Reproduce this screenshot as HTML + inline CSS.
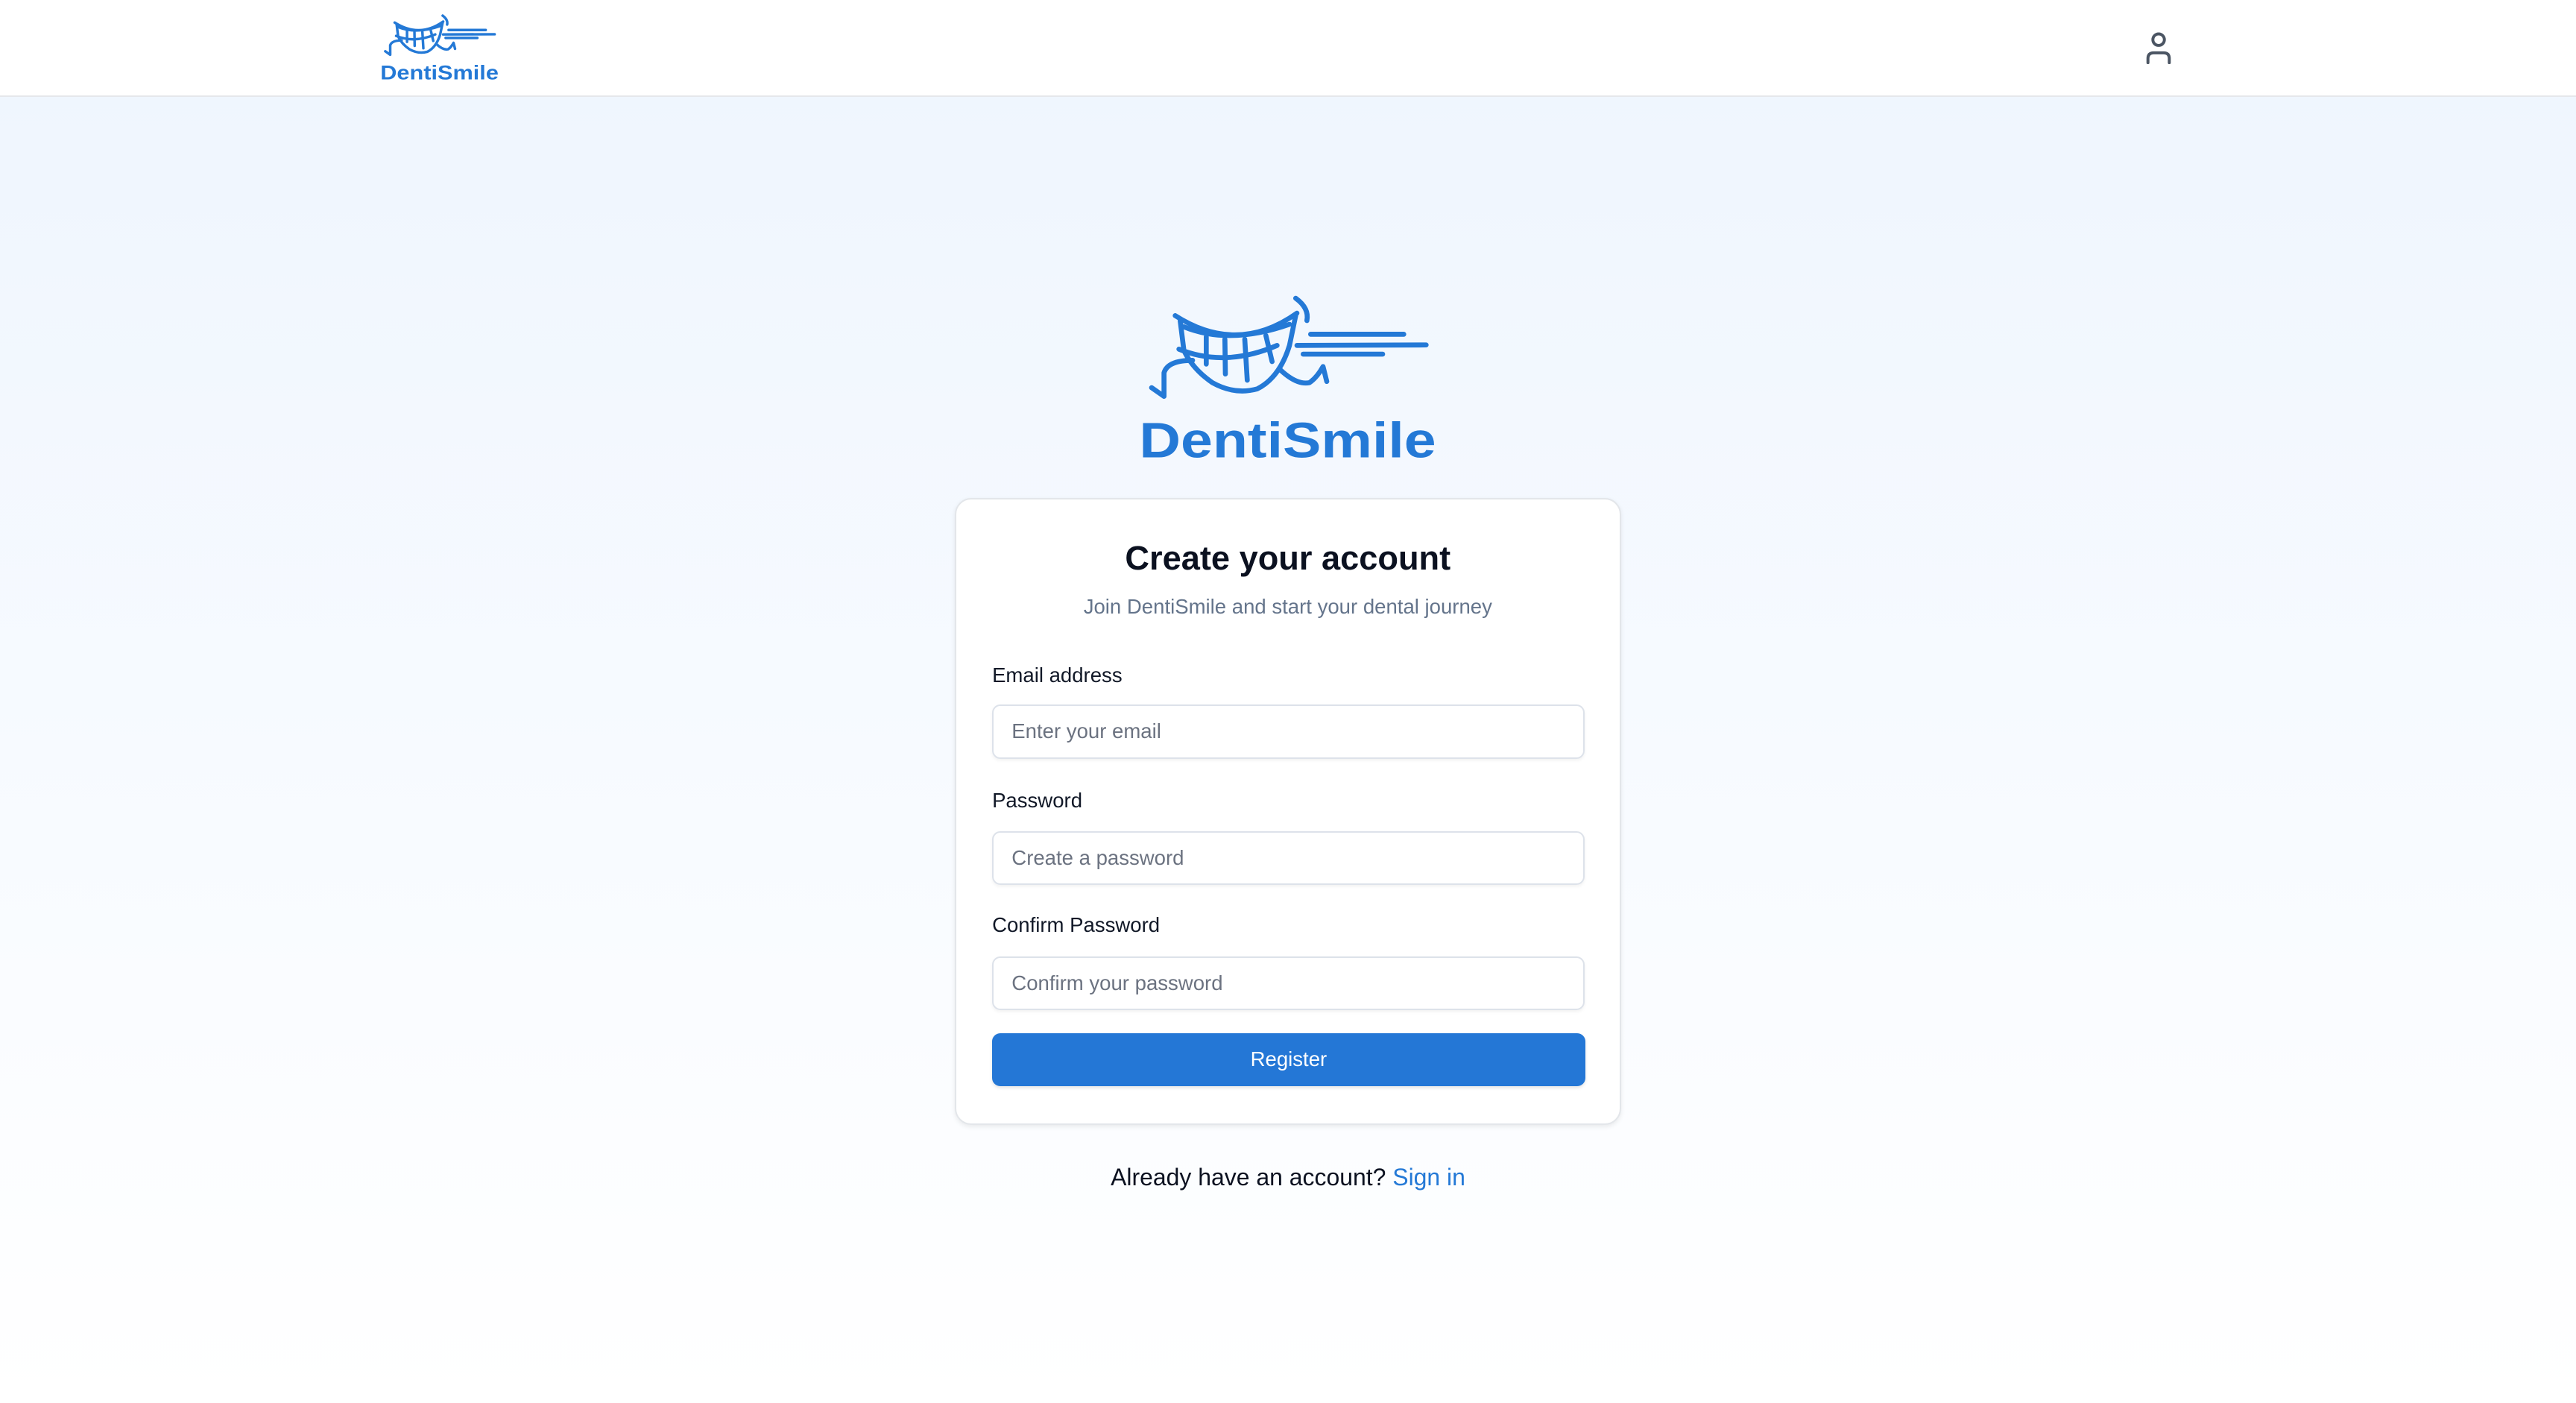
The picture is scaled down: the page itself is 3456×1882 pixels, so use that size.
<!DOCTYPE html>
<html><head><meta charset="utf-8"><style>
html,body{margin:0;padding:0}
body{width:3456px;height:1882px;overflow:hidden;font-family:"Liberation Sans",Arial,sans-serif;}
#z{zoom:2.2041;width:1568px;height:854px;position:relative;background:linear-gradient(180deg,#eef5fe 0%,#f8fbff 60%,#ffffff 100%);}
.hdr{position:absolute;left:0;top:0;width:1568px;height:58px;background:#fff;border-bottom:1px solid #e5e7eb;}
.abs{position:absolute}
.card{position:absolute;left:581px;top:303px;width:404px;height:380px;background:#fff;border:1px solid #e3e6ea;border-radius:10px;box-shadow:0 1px 3px rgba(0,0,0,.08);}
.t{position:absolute;left:0;width:404px;text-align:center}
.lbl{position:absolute;left:22px;font-size:12.5px;color:#111827}
.inp{position:absolute;left:22px;width:359px;height:31px;border:1px solid #dde2ea;border-radius:5px;box-shadow:0 1px 2px rgba(0,0,0,.05);font-size:12.5px;color:#6b7280;line-height:31px;text-indent:11px;box-sizing:content-box}
.btn{position:absolute;left:22px;top:325px;width:361px;height:32px;background:#2477d6;border-radius:5px;color:#fff;font-size:12.5px;text-align:center;line-height:32px;box-shadow:0 1px 2px rgba(0,0,0,.1)}
</style></head><body><div id="z">
<div class="hdr">
<svg class="abs" style="left:226px;top:6px" width="84" height="47" viewBox="0 0 1380 780">
<g fill="none" stroke="#2479d6" stroke-width="26" stroke-linecap="round" stroke-linejoin="round">
<path d="M230,130 Q480,290 720,120"/><path d="M250,150 L265,270 Q300,345 380,400 Q470,450 560,425 Q650,380 690,250 L715,130"/><path d="M245,265 Q430,340 640,250"/><path d="M265,175 Q450,250 690,165"/><path d="M355,215 L355,325 M430,225 L432,365 M510,225 L520,390 M595,210 L620,315"/><path d="M300,310 Q200,310 185,360 L185,455 L135,420"/><path d="M655,350 Q720,410 770,400 Q800,380 825,335 L840,395"/><path d="M715,60 Q770,100 760,150"/><path d="M775,205 L1150,205 M720,250 L1240,248 M745,285 L1065,285"/></g>
<text x="85" y="705" font-size="200" font-weight="bold" fill="#2479d6" textLength="1195" lengthAdjust="spacingAndGlyphs" font-family="Liberation Sans">DentiSmile</text>
</svg>
<svg class="abs" style="left:1304px;top:18px" width="20" height="22" viewBox="0 0 20 22"><g fill="none" stroke="#4b5563" stroke-width="1.8" stroke-linecap="round"><circle cx="10" cy="6" r="3.5"/><path d="M3.5,20 V17.5 Q3.5,14 7,14 H13 Q16.5,14 16.5,17.5 V20"/></g></svg>
</div>
<svg class="abs" style="left:680.6px;top:172.4px" width="208.7" height="118" viewBox="0 0 1380 780">
<g fill="none" stroke="#2479d6" stroke-width="20" stroke-linecap="round" stroke-linejoin="round">
<path d="M230,130 Q480,290 720,120"/><path d="M250,150 L265,270 Q300,345 380,400 Q470,450 560,425 Q650,380 690,250 L715,130"/><path d="M245,265 Q430,340 640,250"/><path d="M265,175 Q450,250 690,165"/><path d="M355,215 L355,325 M430,225 L432,365 M510,225 L520,390 M595,210 L620,315"/><path d="M300,310 Q200,310 185,360 L185,455 L135,420"/><path d="M655,350 Q720,410 770,400 Q800,380 825,335 L840,395"/><path d="M715,60 Q770,100 760,150"/><path d="M775,205 L1150,205 M720,250 L1240,248 M745,285 L1065,285"/></g>
<text x="85" y="700" font-size="200" font-weight="bold" fill="#2479d6" textLength="1195" lengthAdjust="spacingAndGlyphs" font-family="Liberation Sans">DentiSmile</text>
</svg>
<div class="card">
<div class="t" style="top:24px;font-size:20.5px;font-weight:bold;color:#0b1120">Create your account</div>
<div class="t" style="top:58px;font-size:12.5px;color:#64748b">Join DentiSmile and start your dental journey</div>
<div class="lbl" style="top:100px">Email address</div>
<div class="inp" style="top:125px">Enter your email</div>
<div class="lbl" style="top:176px">Password</div>
<div class="inp" style="top:202px">Create a password</div>
<div class="lbl" style="top:252px">Confirm Password</div>
<div class="inp" style="top:278px">Confirm your password</div>
<div class="btn">Register</div>
</div>
<div class="abs" style="left:0;width:1568px;top:708px;text-align:center;font-size:14.5px;color:#0b1120">Already have an account? <span style="color:#2479d6">Sign in</span></div>
</div></body></html>
